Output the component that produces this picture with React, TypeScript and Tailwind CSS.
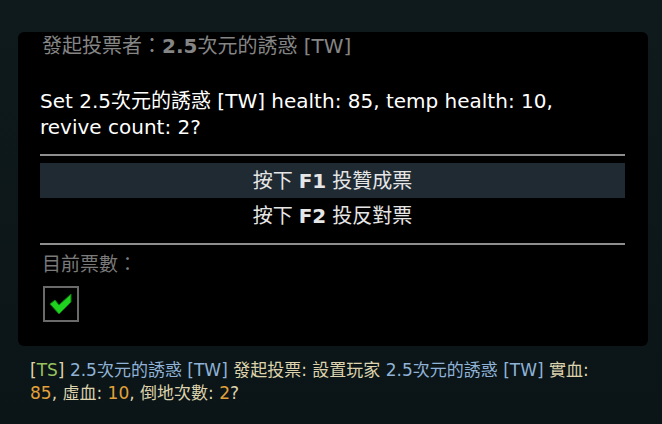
const font = "font-['DejaVu_Sans','Noto_Sans_CJK_TC',sans-serif]"

function CheckBox() {
  return (
    <div className="flex h-[36px] w-[36px] items-center justify-center border-2 border-[#6a6a6a]">
      <svg width="26" height="26" viewBox="0 0 26 26">
        <path d="M2 13 L7 9 L11 14 L23 3 L23 11 L11 23 Z" fill="#1fd21f" stroke="#0d7a0d" strokeWidth="1" />
      </svg>
    </div>
  )
}

export default function App() {
  return (
    <div className={`h-[424px] w-[662px] overflow-hidden bg-gradient-to-b from-[#0f1a1c] to-[#0b1517] pt-[32px] ${font}`}>
      <div className="ml-[18px] mr-[14px] h-[314px] rounded-md bg-black px-[22px] pr-[23px]">
        <p className="pl-[2px] text-[20px] leading-[28px] text-[#858585]">
          發起投票者：<span className="font-semibold">2.5</span>次元的誘惑 [TW]
        </p>
        <p className="mt-[28px] pr-[50px] text-[20px] leading-[26px] text-white">
          Set 2.5次元的誘惑 [TW] health: 85, temp health: 10, revive count: 2?
        </p>
        <div className="mt-[14px] h-[2px] bg-[#8e8e8e]" />
        <div className="mt-[7px] flex h-[35px] items-center justify-center bg-[#1f2a33] text-[20px] text-[#e6e6e6]">
          按下 <span className="mx-[6px] font-semibold">F1</span> 投贊成票
        </div>
        <div className="flex h-[36px] items-center justify-center text-[20px] text-[#e6e6e6]">
          按下 <span className="mx-[6px] font-semibold">F2</span> 投反對票
        </div>
        <div className="mt-[9px] h-[2px] bg-[#8e8e8e]" />
        <p className="mt-[5px] pl-[2px] text-[19px] leading-[28px] text-[#7a7a7a]">目前票數：</p>
        <div className="mt-[8px] pl-[3px]">
          <CheckBox />
        </div>
      </div>
      <p className="mt-[13px] pl-[30px] pr-[60px] text-[17px] leading-[23px] text-[#ddd3ad]">
        [<span className="text-[#97c15f]">TS</span>] <span className="text-[#8fb2d6]">2.5次元的誘惑 [TW]</span> 發起投票: 設置玩家{' '}
        <span className="text-[#8fb2d6]">2.5次元的誘惑 [TW]</span> 實血: <span className="text-[#e2a13a]">85</span>, 虛血:{' '}
        <span className="text-[#e2a13a]">10</span>, 倒地次數: <span className="text-[#e2a13a]">2</span>?
      </p>
    </div>
  )
}
